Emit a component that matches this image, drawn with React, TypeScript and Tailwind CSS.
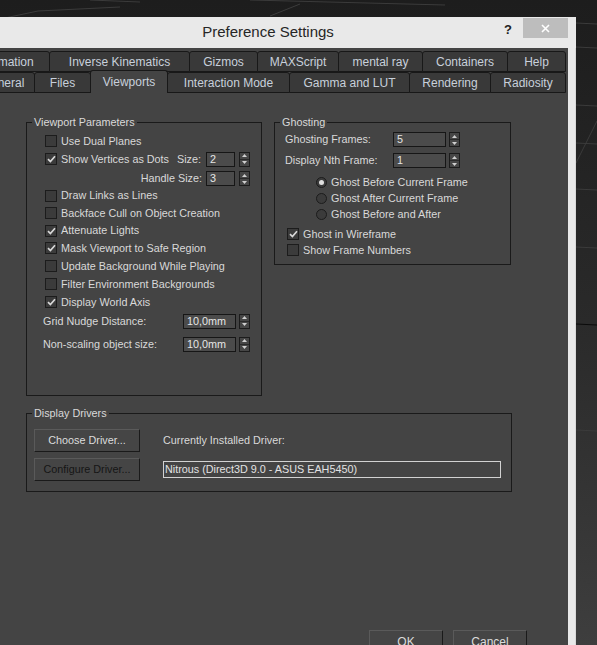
import React from "react";

const Check = ({ on }: { on?: boolean }) => (
  <span className="w-[12px] h-[12px] shrink-0 border border-[#1c1c1c] bg-[#3b3b3b] flex items-center justify-center">
    {on && (
      <svg width="9" height="8" viewBox="0 0 9 8">
        <path d="M1 4.2l2.4 2.4L8 1.2" stroke="#d8d8d8" strokeWidth="1.7" fill="none" />
      </svg>
    )}
  </span>
);

const Radio = ({ on }: { on?: boolean }) => (
  <span className="w-[11px] h-[11px] shrink-0 rounded-full border border-[#1c1c1c] bg-[#3b3b3b] flex items-center justify-center">
    {on && <span className="w-[5px] h-[5px] rounded-full bg-[#e0e0e0]" />}
  </span>
);

const Spin = () => (
  <span className="w-[11px] h-[15px] shrink-0 border border-[#1c1c1c] bg-[#464646] flex flex-col">
    <span className="flex-1 flex items-center justify-center">
      <svg width="5" height="3" viewBox="0 0 5 3">
        <path d="M0 3L2.5 0 5 3z" fill="#d0d0d0" />
      </svg>
    </span>
    <span className="h-px bg-[#2a2a2a]" />
    <span className="flex-1 flex items-center justify-center">
      <svg width="5" height="3" viewBox="0 0 5 3">
        <path d="M0 0L2.5 3 5 0z" fill="#d0d0d0" />
      </svg>
    </span>
  </span>
);

const Field = ({ value, wide }: { value: string; wide?: boolean }) => (
  <span
    className={
      wide
        ? "w-[53px] h-[15px] shrink-0 border border-[#161616] bg-[#4b4b4b] text-[#e6e6e6] pl-[3px] flex items-center"
        : "w-[29px] h-[15px] shrink-0 border border-[#161616] bg-[#4b4b4b] text-[#e6e6e6] pl-[3px] flex items-center"
    }
  >
    {value}
  </span>
);

const CheckRow = ({ label, on, h }: { label: string; on?: boolean; h: string }) => (
  <div className={`${h} flex items-center gap-[4px] whitespace-nowrap`}>
    <Check on={on} />
    <span>{label}</span>
  </div>
);

const row1 = [
  { t: "Animation", w: "w-[86px]" },
  { t: "Inverse Kinematics", w: "w-[141px]" },
  { t: "Gizmos", w: "w-[69px]" },
  { t: "MAXScript", w: "w-[82px]" },
  { t: "mental ray", w: "w-[85px]" },
  { t: "Containers", w: "w-[86px]" },
  { t: "Help", w: "w-[59px]" },
];

const row2 = [
  { t: "General", w: "w-[64px]" },
  { t: "Files", w: "w-[57px]" },
  { t: "Viewports", w: "w-[78px]", active: true },
  { t: "Interaction Mode", w: "w-[123px]" },
  { t: "Gamma and LUT", w: "w-[121px]" },
  { t: "Rendering", w: "w-[82px]" },
  { t: "Radiosity", w: "w-[76px]" },
];

export default function App() {
  return (
    <div className="relative w-[597px] h-[645px] overflow-hidden bg-linear-to-b from-[#1d1d1d] via-[#2a2a2a] to-[#3e3e3e] font-['Segoe_UI','Liberation_Sans',Arial,sans-serif] text-[10.8px] text-[#d9d9d9]">
      <svg className="absolute inset-0" width="597" height="645" viewBox="0 0 597 645">
        <g stroke="#3b3b3b" strokeWidth="1" fill="none">
          <path d="M0 19L38 11" />
          <path d="M38 11L120 7" />
          <path d="M90 0L140 2" />
          <path d="M250 0L445 5" />
          <path d="M270 16L300 4" />
          <path d="M576 23L597 24" />
          <path d="M576 47L597 48" />
          <path d="M576 105L597 106" />
          <path d="M576 143L597 144" />
          <path d="M576 163L597 121" />
          <path d="M576 189L597 190" />
          <path d="M576 247L597 248" />
          <path d="M576 430L597 431" />
          <path d="M576 582L597 583" />
        </g>
        <path d="M576 324L597 325" stroke="#0a0a0a" strokeWidth="1" />
      </svg>

      <div className="relative mt-[17px] -ml-[40px] w-[616px] flex flex-col">
        {/* title bar */}
        <div className="h-[31px] bg-[#e9e9e9] grid grid-cols-[1fr_auto_1fr] items-center">
          <div />
          <span className="text-[15px] text-[#262626]">Preference Settings</span>
          <div className="flex justify-end items-start self-start pt-[1px] pr-[8px]">
            <span className="text-[13px] font-bold text-[#222] mt-[2px] mr-[11px]">?</span>
            <span className="w-[45px] h-[20px] bg-[#bdbdbd] flex items-center justify-center">
              <svg width="9" height="9" viewBox="0 0 9 9">
                <path d="M1 1l7 7M8 1L1 8" stroke="#fff" strokeWidth="1.6" />
              </svg>
            </span>
          </div>
        </div>

        <div className="flex h-[600px]">
          <div className="w-[608px] bg-[#444444] pt-[3px] flex flex-col">
            {/* tabs */}
            <div className="flex pl-[4px] h-[21px] text-[#c8d0db] text-[12px] whitespace-nowrap">
              {row1.map((tab) => (
                <div
                  key={tab.t}
                  className={`${tab.w} -mr-px h-[21px] border border-[#181818] rounded-t-[3px] bg-[#393939] flex items-center justify-center`}
                >
                  {tab.t}
                </div>
              ))}
            </div>
            <div className="flex pl-[11px] h-[21px] text-[#c8d0db] text-[12px] whitespace-nowrap">
              {row2.map((tab) =>
                tab.active ? (
                  <div
                    key={tab.t}
                    className={`${tab.w} -mr-px -mt-[2px] h-[23px] relative z-10 border border-b-0 border-[#181818] rounded-t-[3px] bg-[#444444] flex items-center justify-center`}
                  >
                    {tab.t}
                  </div>
                ) : (
                  <div
                    key={tab.t}
                    className={`${tab.w} -mr-px h-[21px] border border-[#181818] rounded-t-[3px] bg-[#393939] flex items-center justify-center`}
                  >
                    {tab.t}
                  </div>
                )
              )}
            </div>

            {/* panel */}
            <div className="pl-[66px] pt-[22px] flex flex-col whitespace-nowrap">
              <div className="flex items-start gap-[12px]">
                <fieldset className="w-[236px] min-w-0 h-[281px] border border-[#1a1a1a]">
                  <legend className="ml-[5px] px-[2px] leading-[14px]">Viewport Parameters</legend>
                  <div className="pt-[3px] pl-[18px] pr-[11px] flex flex-col">
                    <CheckRow h="h-[18px]" label="Use Dual Planes" />
                    <div className="h-[18px] flex items-center gap-[4px]">
                      <Check on />
                      <span>Show Vertices as Dots</span>
                      <span className="ml-auto mr-[1px]">Size:</span>
                      <Field value="2" />
                      <Spin />
                    </div>
                    <div className="mt-[2px] h-[17px] flex items-center justify-end gap-[4px]">
                      <span>Handle Size:</span>
                      <Field value="3" />
                      <Spin />
                    </div>
                    <CheckRow h="h-[17px]" label="Draw Links as Lines" />
                    <CheckRow h="h-[18px]" label="Backface Cull on Object Creation" />
                    <CheckRow h="h-[17px]" on label="Attenuate Lights" />
                    <CheckRow h="h-[18px]" on label="Mask Viewport to Safe Region" />
                    <CheckRow h="h-[18px]" label="Update Background While Playing" />
                    <CheckRow h="h-[18px]" label="Filter Environment Backgrounds" />
                    <CheckRow h="h-[18px]" on label="Display World Axis" />
                    <div className="mt-[1px] h-[18px] flex items-center -ml-[2px] gap-[3px]">
                      <span>Grid Nudge Distance:</span>
                      <span className="ml-auto" />
                      <Field wide value="10,0mm" />
                      <Spin />
                    </div>
                    <div className="mt-[5px] h-[18px] flex items-center -ml-[2px] gap-[3px]">
                      <span>Non-scaling object size:</span>
                      <span className="ml-auto" />
                      <Field wide value="10,0mm" />
                      <Spin />
                    </div>
                  </div>
                </fieldset>

                <fieldset className="w-[237px] min-w-0 h-[150px] border border-[#1a1a1a]">
                  <legend className="ml-[5px] px-[2px] leading-[14px]">Ghosting</legend>
                  <div className="pt-[2px] pl-[10px] flex flex-col">
                    <div className="h-[17px] pr-[50px] flex items-center gap-[3px]">
                      <span>Ghosting Frames:</span>
                      <span className="ml-auto" />
                      <Field wide value="5" />
                      <Spin />
                    </div>
                    <div className="mt-[4px] h-[17px] pr-[50px] flex items-center gap-[3px]">
                      <span>Display Nth Frame:</span>
                      <span className="ml-auto" />
                      <Field wide value="1" />
                      <Spin />
                    </div>
                    <div className="mt-[5px] pl-[31px] flex flex-col">
                      <div className="h-[16px] flex items-center gap-[4px]">
                        <Radio on />
                        <span>Ghost Before Current Frame</span>
                      </div>
                      <div className="h-[16px] flex items-center gap-[4px]">
                        <Radio />
                        <span>Ghost After Current Frame</span>
                      </div>
                      <div className="h-[16px] flex items-center gap-[4px]">
                        <Radio />
                        <span>Ghost Before and After</span>
                      </div>
                    </div>
                    <div className="mt-[4px] pl-[2px] flex flex-col">
                      <CheckRow h="h-[16px]" on label="Ghost in Wireframe" />
                      <CheckRow h="h-[16px]" label="Show Frame Numbers" />
                    </div>
                  </div>
                </fieldset>
              </div>

              <fieldset className="mt-[10px] w-[486px] min-w-0 h-[86px] border border-[#1a1a1a]">
                <legend className="ml-[5px] px-[2px] leading-[14px]">Display Drivers</legend>
                <div className="mt-[9px] pl-[7px] grid grid-cols-[106px_338px] grid-rows-[23px_23px] gap-x-[23px] gap-y-[6px]">
                  <button className="border border-[#1a1a1a] border-t-[#5a5a5a] border-l-[#5a5a5a] bg-[#454545] text-[#dcdcdc]">
                    Choose Driver...
                  </button>
                  <span className="self-center">Currently Installed Driver:</span>
                  <button className="border border-[#1a1a1a] border-t-[#5a5a5a] border-l-[#5a5a5a] bg-[#454545] text-[#151515]">
                    Configure Driver...
                  </button>
                  <span className="self-center h-[17px] border border-[#d2d2d2] bg-[#444444] pl-[1px] flex items-center text-[#e2e2e2]">
                    Nitrous (Direct3D 9.0 - ASUS EAH5450)
                  </span>
                </div>
              </fieldset>

              <div className="mt-[138px] pr-[41px] flex justify-end gap-[10px]">
                <button className="w-[74px] h-[23px] border border-[#1a1a1a] border-t-[#5a5a5a] border-l-[#5a5a5a] bg-[#454545] text-[#dcdcdc] text-[12px]">
                  OK
                </button>
                <button className="w-[74px] h-[23px] border border-[#1a1a1a] border-t-[#5a5a5a] border-l-[#5a5a5a] bg-[#454545] text-[#dcdcdc] text-[12px]">
                  Cancel
                </button>
              </div>
            </div>
          </div>
          <div className="w-[8px] bg-[#e9e9e9] border-r border-[#d9d9d9]" />
        </div>
      </div>
    </div>
  );
}
